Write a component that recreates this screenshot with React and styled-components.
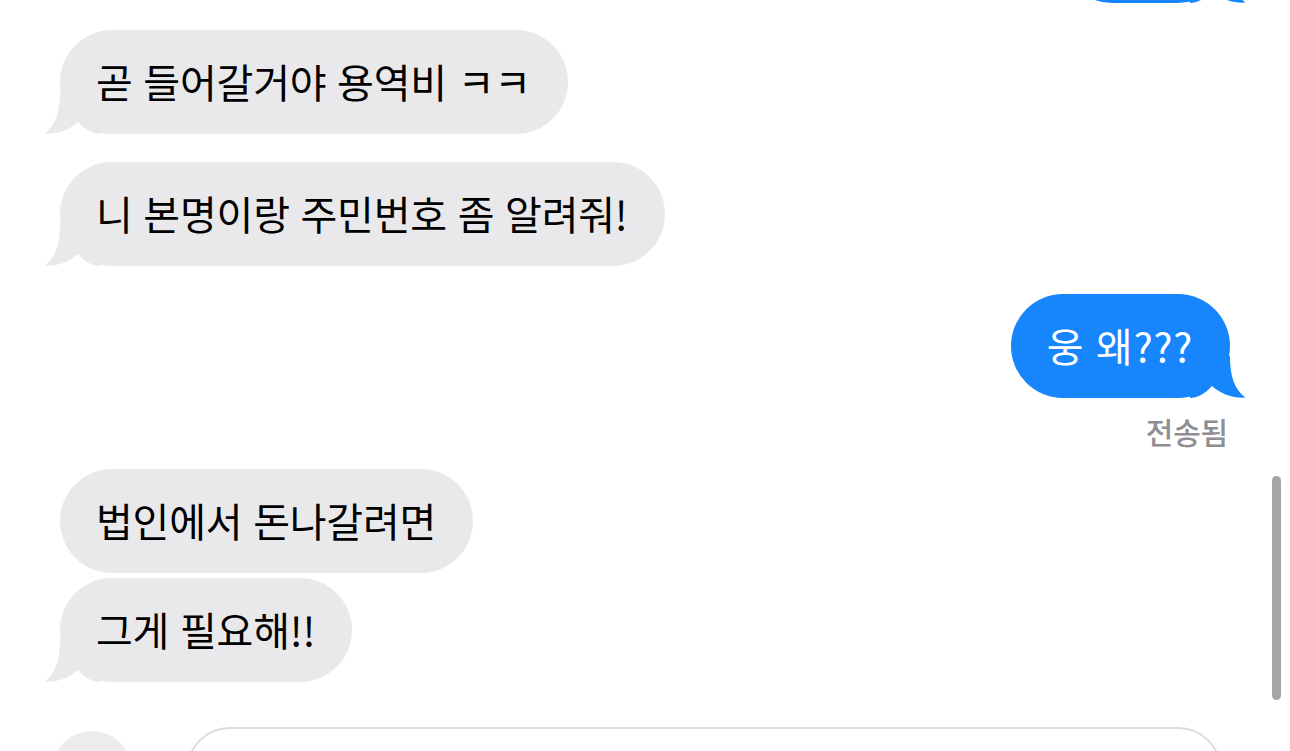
import React from "react";
import styled, { createGlobalStyle } from "styled-components";

const GlobalStyle = createGlobalStyle`
  html, body {
    margin: 0;
    padding: 0;
    background: #ffffff;
  }
  body {
    font-family: "Noto Sans CJK KR", "Noto Sans", sans-serif;
    -webkit-font-smoothing: antialiased;
  }
`;

const Screen = styled.div`
  position: relative;
  width: 1290px;
  height: 751px;
  overflow: hidden;
  background: #ffffff;
`;

const Thread = styled.div`
  display: flex;
  flex-direction: column;
  padding: 0 60px;
`;

const Row = styled.div`
  display: flex;
  justify-content: ${(p) => (p.$out ? "flex-end" : "flex-start")};
  margin-top: ${(p) => p.$gap || 0}px;
`;

const Bubble = styled.div`
  position: relative;
  box-sizing: border-box;
  height: 104px;
  min-width: ${(p) => p.$minWidth || 0}px;
  display: flex;
  align-items: center;
  padding: ${(p) => (p.$out ? "0 37px 2px 36px" : "0 37px 2px 36px")};
  border-radius: 52px;
  background: ${(p) => (p.$out ? "#1786fd" : "#e9e9eb")};
  color: ${(p) => (p.$out ? "#ffffff" : "#000000")};
  font-size: 40px;
  letter-spacing: ${(p) => (p.$out ? "0.8px" : "-0.2px")};
  word-spacing: 2px;
  white-space: nowrap;
`;

const BubbleText = styled.span`
  position: relative;
  z-index: 1;
`;

const TailShape = styled.svg`
  position: absolute;
  bottom: 0;
  width: 56px;
  height: 44px;
  ${(p) => (p.$out ? "right: -16px; transform: scaleX(-1);" : "left: -16px;")}
`;

const Tail = ({ out }) => (
  <TailShape $out={out} viewBox="0 0 56 44" aria-hidden="true">
    <path
      d="M16 2 C16 22 12 35 0.5 43.6 C 12 44.5 25 40.5 34 32 C 41 40 49 44 56 44 L 56 2 Z"
      fill={out ? "#1786fd" : "#e9e9eb"}
    />
  </TailShape>
);

const Status = styled.div`
  align-self: flex-end;
  margin-top: 16px;
  margin-right: 2px;
  height: 35px;
  line-height: 35px;
  font-size: 30px;
  font-weight: 500;
  letter-spacing: -0.2px;
  color: #8e8e93;
`;

const Clipped = styled(Row)`
  margin-top: -101px;
`;

const Composer = styled.div`
  display: flex;
  align-items: center;
  gap: 54px;
  margin-top: 45px;
  padding: 0 68px 0 52px;
`;

const RoundButton = styled.div`
  flex: none;
  width: 80px;
  height: 80px;
  border-radius: 50%;
  background: #ececee;
`;

const InputField = styled.div`
  flex: 1;
  box-sizing: border-box;
  height: 88px;
  border: 2.5px solid #dcdcde;
  border-radius: 46px;
`;

const ScrollIndicator = styled.div`
  position: absolute;
  top: 476px;
  right: 9px;
  width: 9px;
  height: 224px;
  border-radius: 5px;
  background: #a6a6a8;
`;

const Message = ({ out, tail, gap, children }) => (
  <Row $out={out} $gap={gap}>
    <Bubble $out={out}>
      {tail && <Tail out={out} />}
      <BubbleText>{children}</BubbleText>
    </Bubble>
  </Row>
);

export default function App() {
  return (
    <>
      <GlobalStyle />
      <Screen>
        <Thread>
          {/* earlier outgoing message, scrolled almost out of view */}
          <Clipped $out>
            <Bubble $out $minWidth={170}>
              <Tail out />
            </Bubble>
          </Clipped>
          <Message tail gap={27}>곧 들어갈거야 용역비 ㅋㅋ</Message>
          <Message tail gap={28}>니 본명이랑 주민번호 좀 알려줘!</Message>
          <Message out tail gap={28}>웅 왜???</Message>
          <Status>전송됨</Status>
          <Message gap={20}>법인에서 돈나갈려면</Message>
          <Message tail gap={5}>그게 필요해!!</Message>
        </Thread>
        <Composer>
          <RoundButton />
          <InputField />
        </Composer>
        <ScrollIndicator />
      </Screen>
    </>
  );
}
